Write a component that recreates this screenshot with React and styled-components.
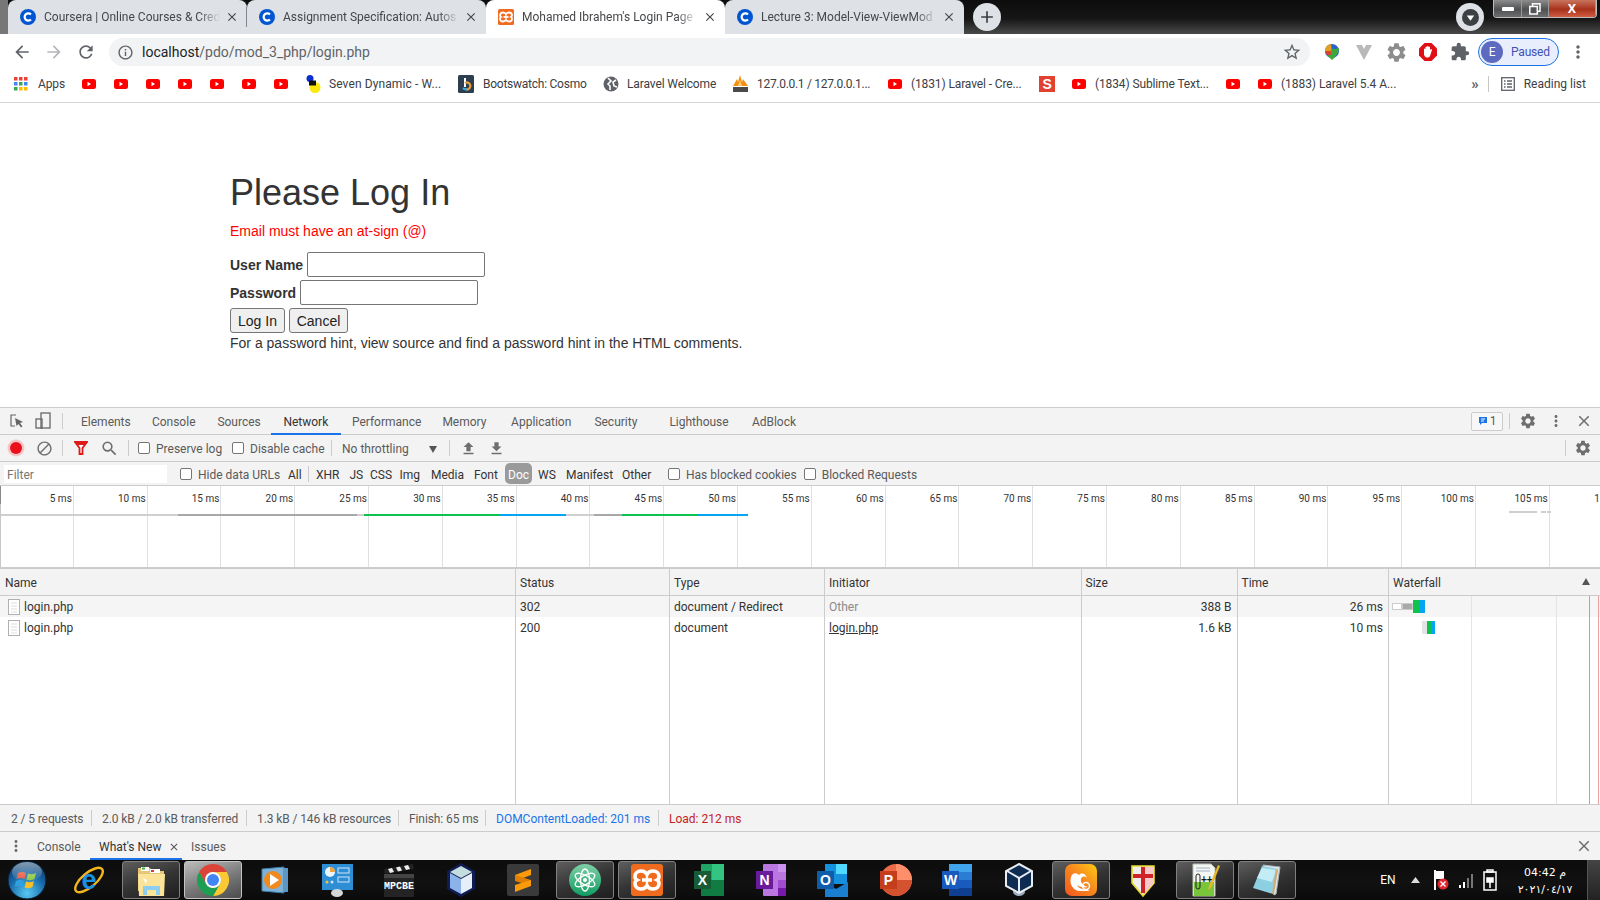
import React from 'react';
import styled, { createGlobalStyle } from 'styled-components';
import {
  MdArrowBack, MdArrowForward, MdRefresh, MdInfoOutline, MdStarBorder, MdExtension, MdMoreVert,
  MdClose, MdAdd, MdSettings, MdSearch, MdBlock, MdFileUpload, MdFileDownload,
} from 'react-icons/md';

const UI = '"Roboto", "Liberation Sans", sans-serif';

const Global = createGlobalStyle`
  html, body { margin: 0; padding: 0; background: #fff; overflow: hidden; }
  * { box-sizing: border-box; }
`;

const Screen = styled.div`
  width: 1600px; height: 900px; display: flex; flex-direction: column; overflow: hidden;
  font-family: ${UI}; font-size: 12px; color: #333;
`;

/* ---------- browser tab strip ---------- */
const TabStrip = styled.div`
  height: 34px; flex: none; display: flex; align-items: flex-start; padding-left: 8px;
  background: linear-gradient(90deg, #777 0, #777 8px, transparent 8px), linear-gradient(#0d0d0d 0, #161616 55%, #4a4a4a 100%);
`;
const Tab = styled.div`
  position: relative; width: 239px; height: 34px; display: flex; align-items: center; padding: 0 8px 0 12px;
  background: ${p => (p.$active ? '#fff' : '#dee1e6')}; border-radius: 8px 8px 0 0;
  ${p => p.$sep && `&::after { content: ''; position: absolute; right: 0; top: 7px; bottom: 7px; width: 1px; background: #80868b; }`}
`;
const TabTitle = styled.span`
  flex: 1; min-width: 0; margin-left: 8px; white-space: nowrap; overflow: hidden; font-size: 12px; color: #45474a;
  -webkit-mask-image: linear-gradient(90deg, #000 88%, transparent);
  mask-image: linear-gradient(90deg, #000 88%, transparent);
`;
const TabClose = styled.span`
  flex: none; width: 14px; display: flex; margin-left: 5px; color: #45474a; font-size: 14px;
`;
const NewTab = styled.div`
  width: 28px; height: 28px; margin: 3px 0 0 9px; border-radius: 50%; background: #dee1e6; color: #3c4043;
  display: flex; align-items: center; justify-content: center; font-size: 20px;
`;
const ProfileMenu = styled.div`
  width: 28px; height: 28px; margin: 3px 0 0 auto; border-radius: 50%; background: #dee1e6;
  display: flex; align-items: center; justify-content: center;
`;
const WindowControls = styled.div`
  width: 104px; height: 18px; margin: 0 3px 0 9px; display: flex; border: 1px solid #bdbdbd; border-top: 0; border-radius: 0 0 4px 4px; overflow: hidden;
`;
const WinBtn = styled.div`
  width: ${p => p.$w}px; flex: none; display: flex; align-items: center; justify-content: center; color: #fff;
  border-right: 1px solid #9a9a9a; font-size: 13px; font-weight: 700;
  background: ${p => (p.$close ? 'linear-gradient(#c9745f, #a9311a 55%, #cf5d44)' : 'linear-gradient(#8d8d8d, #4e5052 55%, #6c6e70)')};
`;

/* ---------- browser toolbar ---------- */
const Toolbar = styled.div`
  height: 35px; flex: none; display: flex; align-items: center; padding: 1px 0 0 6px; background: #fff;
`;
const NavBtn = styled.div`
  width: ${p => p.$w || 32}px; height: 28px; flex: none; display: flex; align-items: center; justify-content: center;
  font-size: ${p => p.$size || 20}px; color: ${p => (p.$off ? '#b5b7ba' : '#5f6368')};
`;
const Address = styled.div`
  width: 1201px; height: 28px; margin: 0 6px 0 7px; border-radius: 14px; background: #f1f3f4; display: flex; align-items: center; padding-left: 8px;
  font-size: 14px; color: #5f6368;
`;
const Host = styled.span`color: #202124; margin-left: 8px;`;
const AddressEnd = styled.span`margin-left: auto; margin-right: 8px; display: flex; font-size: 20px; color: #5f6368;`;
const ProfilePill = styled.div`
  width: 81px; height: 28px; margin-left: 2px; border: 1px solid #1a73e8; border-radius: 14px; background: #e8eefc; display: flex; align-items: center; padding-left: 2px; color: #3f51b5; font-size: 12px; letter-spacing: -0.2px;
`;
const Avatar = styled.span`
  width: 22px; height: 22px; margin-right: 8px; border-radius: 50%; background: #5c6bc0; color: #fff; display: flex; align-items: center; justify-content: center; font-size: 12px;
`;

/* ---------- bookmarks ---------- */
const BookmarkBar = styled.div`
  height: 34px; flex: none; display: flex; align-items: center; padding: 0 14px 3px 14px; background: #fff; border-bottom: 1px solid #d6d6d6;
`;
const Bookmark = styled.div`
  width: ${p => p.$w}px; flex: none; display: flex; align-items: center; gap: ${p => p.$gap ?? 8}px; white-space: nowrap; font-size: 12px; letter-spacing: ${p => p.$ls ?? -0.12}px; color: #3c4043;
`;
const BookmarkEnd = styled.div`
  margin-left: auto; display: flex; align-items: center; color: #3c4043; font-size: 12px;
`;
const Chevrons = styled.span`font-size: 15px; font-weight: 700; color: #5f6368; margin-right: 9px; line-height: 1;`;
const VRule = styled.span`width: 1px; height: 16px; background: #c7c7c7; margin-right: 12px;`;
const ReadingLabel = styled.span`margin-left: 9px;`;

/* ---------- page ---------- */
const Page = styled.main`
  height: 304px; flex: none; padding: 70px 0 0 230px; background: #fff; font-family: "Liberation Sans", Arial, sans-serif; font-size: 14px; line-height: 20px; color: #333;
`;
const Heading = styled.h1`
  margin: 0 0 9px; font-size: 36px; font-weight: 400; line-height: 39px;
`;
const ErrorText = styled.p`margin: 0 0 11px; color: #f00;`;
const FieldRow = styled.p`margin: 0 0 3px; height: 25px; display: flex; align-items: center; gap: 4px;`;
const FieldLabel = styled.label`font-weight: 700;`;
const TextInput = styled.div`
  width: 178px; height: 25px; background: #fff; border: 1px solid #767676; border-radius: 2px;
`;
const Buttons = styled.div`display: flex; gap: 4px; height: 25px;`;
const PageButton = styled.div`
  width: ${p => p.$w}px; height: 25px; display: flex; align-items: center; justify-content: center; background: #efefef; border: 1px solid #767676; border-radius: 3px; color: #222;
`;
const Hint = styled.p`margin: 0; `;

/* ---------- devtools ---------- */
const DevTools = styled.section`
  flex: 1; min-height: 0; display: flex; flex-direction: column; background: #f3f3f3; color: #333; font-size: 12px;
`;
const Bar = styled.div`
  height: ${p => p.$h}px; flex: none; display: flex; align-items: center; background: #f3f3f3;
  border-bottom: 1px solid #ccc; ${p => p.$top && 'border-top: 1px solid #ccc;'}
  color: #5a5a5a;
`;
const DevIcon = styled.span`
  width: ${p => p.$w || 28}px; flex: none; height: 100%; display: flex; align-items: center; justify-content: center; font-size: ${p => p.$size || 17}px; color: ${p => p.$color || '#6e6e6e'};
  ${p => p.$end && 'margin-left: auto; margin-right: 2px;'}
`;
const Sep = styled.span`
  width: 1px; height: 16px; flex: none; background: #ccc; margin: 0 ${p => p.$r ?? 6}px 0 ${p => p.$l ?? 6}px;
`;
const PushSep = styled(Sep)`margin-left: auto;`;
const EndGap = styled.span`width: 2px; flex: none;`;
const DevTab = styled.div`
  width: ${p => p.$w}px; flex: none; height: 100%; display: flex; align-items: center; position: relative; padding-top: 2px; color: #5a5a5a;
  ${p => p.$active && `color: #333; &::after { content: ''; position: absolute; left: -12px; right: 11px; bottom: -1px; height: 2px; background: #1a73e8; }`}
`;
const Badge = styled.div`
  width: 32px; height: 19px; margin-left: auto; border: 1px solid #ccc; border-radius: 2px; display: flex; align-items: center; justify-content: center; gap: 2px; color: #5a5a5a; background: #f7f7f7;
`;
const CheckLabel = styled.label`
  width: ${p => p.$w}px; flex: none; display: flex; align-items: center; gap: 6px; white-space: nowrap; color: #5a5a5a; padding-top: 2px;
`;
const Box = styled.span`
  width: 12px; height: 12px; flex: none; margin-top: -2px; background: #fff; border: 1px solid #767676; border-radius: 2px;
`;
const Throttle = styled.div`
  width: 107px; flex: none; display: flex; align-items: center; justify-content: space-between; color: #5a5a5a; padding: 2px 12px 0 0;
`;
const Triangle = styled.span`
  width: 0; height: 0; border: 4px solid transparent; border-top: 7px solid #555; border-bottom: 0;
`;
const FilterInput = styled.div`
  width: 163px; height: 18px; margin: 0 13px 0 4px; background: #fff; padding: 2px 3px 0; display: flex; align-items: center; color: #757575;
`;
const TypeBtn = styled.div`
  width: ${p => p.$w}px; flex: none; height: 21px; padding-top: 2px; margin-left: ${p => p.$ml || 0}px; display: flex; align-items: center; justify-content: ${p => (p.$on ? 'center' : 'flex-start')};
  color: ${p => (p.$on ? '#fff' : '#333')}; background: ${p => (p.$on ? '#9a9a9a' : 'transparent')}; border-radius: ${p => (p.$on ? '5px' : '0')};
`;

const Overview = styled.div`
  height: 83px; flex: none; position: relative; display: flex; background: #fff; overflow: hidden;
  border-bottom: 2px solid #ccc;
  &::before { content: ''; position: absolute; left: 0; top: 0; width: 1px; height: 18px; background: #888; }
  &::after { content: ''; position: absolute; left: 0; top: 18px; bottom: 0; width: 1px; background: #c8c8c8; }
`;
const Tick = styled.div`
  flex: 0 0 ${p => p.$w}px; border-right: 1px solid #e0e0e0; padding: 6px 1px 0 0; text-align: right; font-size: 10px; color: #333; white-space: nowrap; line-height: 13px;
  &:last-of-type { flex-basis: 78.8px; padding-right: 0; }
`;
const Traffic = styled.svg`position: absolute; left: 0; top: 0; pointer-events: none;`;

const Grid = styled.div`
  display: grid; grid-template-columns: 515px 154px 155px 256.5px 156px 151.5px 212px; flex: ${p => (p.$fill ? '1' : 'none')}; min-height: 0;
  height: ${p => (p.$fill ? 'auto' : p.$h + 'px')}; background: ${p => p.$bg || '#fff'};
  ${p => p.$line && 'border-bottom: 1px solid #ccc;'}
`;
const Cell = styled.div`
  position: relative; display: flex; align-items: center; justify-content: ${p => (p.$right ? 'flex-end' : 'flex-start')}; gap: 5px; white-space: nowrap;
  border-left: ${p => (p.$first ? '1px solid transparent' : '1px solid #ccc')}; padding: ${p => (p.$head ? 2 : 0)}px ${p => (p.$right ? 5 : 4)}px 0;
  color: ${p => p.$color || '#333'}; ${p => p.$link && 'text-decoration: underline;'}
`;
const FileSlot = styled.span`display: flex; margin-left: 3px; margin-right: -1px;`;
const SortArrow = styled.span`
  position: absolute; right: 10px; top: 50%; margin-top: -4px; width: 0; height: 0; border: 4px solid transparent; border-bottom: 7px solid #555; border-top: 0;
`;
const WfLine = styled.span`
  position: absolute; top: 0; bottom: 0; left: ${p => p.$x}px; width: 1px; background: ${p => p.$c};
`;
const WfBar = styled.span`
  position: absolute; top: 4px; height: 13px; left: ${p => p.$x}px; width: ${p => p.$w}px; background: ${p => p.$c};
  ${p => p.$outline && 'border: 1px solid #ccc; top: 7px; height: 7px;'}
`;
const StatusBar = styled.div`
  height: 28px; flex: none; display: flex; align-items: center; background: #f3f3f3; border-top: 1px solid #ccc; border-bottom: 1px solid #ccc; padding-left: 11px;
`;
const StatusItem = styled.div`
  width: ${p => p.$w}px; height: 16px; flex: none; display: flex; align-items: center; padding-top: 2px; white-space: nowrap; letter-spacing: ${p => (p.$color ? 0 : -0.1)}px; color: ${p => p.$color || '#5a5a5a'};
  ${p => p.$sep && 'border-right: 1px solid #ccc; margin-right: 10px;'}
`;
const Drawer = styled.div`
  height: 28px; flex: none; display: flex; align-items: center; background: #f3f3f3; color: #5a5a5a; position: relative;
`;
const DrawerTab = styled.div`
  width: ${p => p.$w}px; flex: none; height: 100%; display: flex; align-items: center; padding: 1px 0 0 ${p => p.$pad}px; gap: 7px; position: relative; color: #5a5a5a;
  ${p => p.$active && `color: #333; &::after { content: ''; position: absolute; left: 0; right: 0; bottom: 0; height: 2px; background: #1a73e8; }`}
`;
const TinyX = styled.span`font-size: 12px; display: flex; color: #555;`;

/* ---------- taskbar ---------- */
const Taskbar = styled.footer`
  height: 40px; flex: none; display: flex; align-items: center; background: linear-gradient(#0c0c0c, #111 60%, #0a0a0a); position: relative; z-index: 1;
`;
const StartOrb = styled.div`width: 60px; flex: none; height: 100%; display: flex; align-items: center; padding-left: 7px;`;
const TaskItems = styled.div`display: flex; gap: 4px; height: 100%; align-items: center;`;
const TaskItem = styled.div`
  width: 58px; flex: none; height: 38px; display: flex; align-items: center; justify-content: center; border-radius: 3px;
  ${p => p.$open && 'background: linear-gradient(160deg, #5e5e5e, #343434 50%, #1e1e1e); border: 1px solid #808080;'}
  ${p => p.$hot && 'background: linear-gradient(160deg, #bdbdbd, #777 55%, #4c4c4c); border: 1px solid #c4c4c4;'}
`;
const Tray = styled.div`
  margin-left: auto; height: 100%; display: flex; align-items: center; color: #fff; font-size: 12px;
`;
const TrayItem = styled.span`
  width: ${p => p.$w}px; flex: none; display: flex; align-items: center; justify-content: center;
`;
const Clock = styled.div`
  width: 78px; flex: none; display: flex; flex-direction: column; align-items: center; padding-top: 2px; color: #fff; font-family: "DejaVu Sans", "Noto Sans", sans-serif; font-size: 11px; line-height: 17px; margin-left: 3px;
`;
const ShowDesktop = styled.span`width: 13px; height: 100%; margin-left: 3px; background: linear-gradient(#444, #222); border-left: 1px solid #555;`;

/* ---------- drawings ---------- */
const Coursera = () => (
  <svg width="16" height="16" viewBox="0 0 16 16"><circle cx="8" cy="8" r="8" fill="#0056d2" /><path d="M11 5.400A3.700 3.700 0 1 0 11 10.600" fill="none" stroke="#fff" strokeWidth="2.200" /></svg>
);
const Xampp = ({ s = 16 }) => (
  <svg width={s} height={s} viewBox="0 0 32 32"><rect width="32" height="32" rx="3" fill="#ef6c1f" /><g fill="none" stroke="#fff" strokeWidth="3.600"><path d="M16 11c-1-3-3-4-6-4-4 0-6 3-6 5.500S6 16 6 16s-2 1-2 3.500S6 25 10 25c3 0 5-1 6-4" /><path d="M16 11c1-3 3-4 6-4 4 0 6 3 6 5.500S26 16 26 16s2 1 2 3.500S26 25 22 25c-3 0-5-1-6-4" /><path d="M11 16h10" /><path d="M16 11v10" strokeWidth="2.400" /></g></svg>
);
const YT = () => (
  <svg width="16" height="12" viewBox="0 0 16 12"><rect x="1" y="1" width="14" height="10" rx="2.500" fill="#f00" /><path d="M6.500 3.800v4.400L10 6z" fill="#fff" /></svg>
);
const AppsGrid = () => (
  <svg width="14" height="14" viewBox="0 0 14 14">
    {['#ea4335', '#ea4335', '#ea4335', '#4285f4', '#34a853', '#4285f4', '#34a853', '#fbbc04', '#fbbc04'].map((c, i) => (
      <rect key={i} x={(i % 3) * 5} y={Math.floor(i / 3) * 5} width="3.500" height="3.500" fill={c} />
    ))}
  </svg>
);
const SevenDyn = () => (
  <svg width="16" height="18" viewBox="0 0 16 18"><circle cx="10" cy="12.500" r="5.500" fill="#fde910" /><circle cx="5" cy="3.500" r="3.500" fill="#0b2fd0" /><rect x="4" y="5.500" width="7" height="5" fill="#111" /></svg>
);
const Bootswatch = () => (
  <svg width="16" height="18" viewBox="0 0 16 18"><rect width="16" height="18" rx="1.500" fill="#2c3e50" /><path d="M7 3v9" stroke="#fff" strokeWidth="2" /><path d="M7 8a3.500 3.500 0 1 1 0 6" fill="none" stroke="#f0a030" strokeWidth="2" /><path d="M5 13a3.500 3.500 0 0 0 4 1" fill="none" stroke="#39a9db" strokeWidth="2" /></svg>
);
const Globe = () => (
  <svg width="16" height="16" viewBox="0 0 16 16"><circle cx="8" cy="8" r="7.500" fill="#5f6368" /><path d="M5 2l3 3-3 3 2 2v4M13 4l-3 2 1 4 3 1" fill="none" stroke="#fff" strokeWidth="1.600" /></svg>
);
const Pma = () => (
  <svg width="17" height="18" viewBox="0 0 17 18"><path d="M1 11L5 4l1 3 2-7 2 7 1-3 5 7z" fill="#f29111" /><path d="M6 11l2-6 2 6z" fill="#fbc97a" /><rect x="1" y="12" width="15" height="5" fill="#4a4a4a" /></svg>
);
const SBadge = () => (
  <svg width="16" height="16" viewBox="0 0 16 16"><rect width="16" height="16" fill="#e2412f" /><text x="8" y="13" fontFamily="Liberation Sans" fontSize="14" fontWeight="700" fill="#fff" textAnchor="middle">S</text></svg>
);
const ReadingList = () => (
  <svg width="14" height="14" viewBox="0 0 14 14" fill="none" stroke="#5f6368" strokeWidth="1.300"><rect x=".7" y=".7" width="12.600" height="12.600" /><path d="M3 4h1.500M6 4h5M3 7h1.500M6 7h5M3 10h1.500M6 10h5" /></svg>
);
const IDM = () => (
  <svg width="18" height="18" viewBox="0 0 18 18"><circle cx="9" cy="8" r="7" fill="#2a62c9" /><path d="M2 8a7 7 0 0 1 6-7l1 7z" fill="#e0a028" /><path d="M2 8c1 4 4 6 7 6V8z" fill="#d8432e" /><path d="M8 6c3 0 5 0 8-1-.5 4-1.500 7-7 12L4 12h4z" fill="#3fa63b" /></svg>
);
const VExt = () => <svg width="16" height="16" viewBox="0 0 16 16"><path d="M0 1h6l2 4 2-4h6L8 16z" fill="#b9b9b9" /></svg>;
const AdBlockExt = () => (
  <svg width="18" height="18" viewBox="0 0 18 18"><path d="M5.500 0h7L18 5.500v7L12.500 18h-7L0 12.500v-7z" fill="#e00f16" /><path d="M5 9V6a1 1 0 0 1 1.500 0V4a1 1 0 0 1 1.500 0v-.500a1 1 0 0 1 1.500 0V4a1 1 0 0 1 1.500 0v3l1-1a1 1 0 0 1 1 1l-2 6c-.5 1-1.500 1.500-2.500 1.500H8c-2 0-3-2-3-3.500z" fill="#fff" /></svg>
);
const Rec = () => <svg width="18" height="18" viewBox="0 0 18 18"><circle cx="9" cy="9" r="8.500" fill="#f6c6c6" /><circle cx="9" cy="9" r="6" fill="#e8111b" /></svg>;
const Inspect = () => (
  <svg width="16" height="16" viewBox="0 0 16 16" fill="none"><path d="M7 2H2v11h4" stroke="#666" strokeWidth="1.200" /><path d="M6 5l8 4-3 1 2.500 3.500-1.500 1L9.500 11 7.500 13z" fill="#666" /></svg>
);
const Device = () => (
  <svg width="16" height="18" viewBox="0 0 16 18" fill="none" stroke="#666" strokeWidth="1.300"><rect x="6" y="1" width="9" height="15" /><rect x="1" y="7" width="6" height="9" /></svg>
);
const Funnel = () => <svg width="14" height="14" viewBox="0 0 14 14"><path d="M1 1h12L8.500 7v6h-3V7z" fill="#fff" stroke="#e01919" strokeWidth="1.800" /><path d="M1 1h12L11 4H3z" fill="#e01919" /></svg>;
const FileDoc = () => (
  <svg width="12" height="16" viewBox="0 0 12 16" fill="#fff" stroke="#b0b0b0"><rect x=".5" y=".5" width="11" height="15" /><path d="M3 4h6M3 7h6M3 10h6M3 13h6" stroke="#ddd" /></svg>
);
const MsgIcon = () => <svg width="10" height="10" viewBox="0 0 10 10"><path d="M1 1h8v6H4L2 9V7H1z" fill="#1a73e8" /><path d="M3 3h4M3 5h3" stroke="#fff" /></svg>;

const S = p => <svg width="34" height="34" viewBox="0 0 34 34" {...p} />;
const Orb = () => (
  <svg width="40" height="40" viewBox="0 0 40 40">
    <defs>
      <radialGradient id="orb" cx=".5" cy=".85" r=".9"><stop offset="0" stopColor="#58c8f2" /><stop offset=".55" stopColor="#1668a8" /><stop offset="1" stopColor="#0a2a50" /></radialGradient>
      <linearGradient id="gloss" x1="0" y1="0" x2="0" y2="1"><stop offset="0" stopColor="#fff" stopOpacity=".5" /><stop offset="1" stopColor="#fff" stopOpacity="0" /></linearGradient>
    </defs>
    <circle cx="20" cy="20" r="19" fill="url(#orb)" stroke="#0a1a2c" strokeWidth="1" />
    <path d="M11 13c3-1.500 5-1 8 0l-1.500 6c-3-1-5-1.500-8 0z" fill="#e8523a" /><path d="M21 13.500c3 1 5 1 8-.5l-1.500 6c-3 1.500-5 1.500-8 .5z" fill="#8cc63f" />
    <path d="M9 21c3-1.500 5-1 8 0l-1.500 6c-3-1-5-1.500-8 0z" fill="#2f9fe0" /><path d="M19 21.500c3 1 5 1 8-.5l-1.500 6c-3 1.500-5 1.500-8 .5z" fill="#f6c026" />
    <ellipse cx="20" cy="12" rx="15" ry="10" fill="url(#gloss)" />
  </svg>
);
const TaskIcons = {
  ie: () => (<S><ellipse cx="17" cy="17" rx="17" ry="7" fill="none" stroke="#f3b71d" strokeWidth="2.400" transform="rotate(-40 17 17)" /><text x="17" y="26" textAnchor="middle" fontFamily="Liberation Sans" fontWeight="700" fontSize="27" fill="#1b8fe0">e</text></S>),
  folder: () => (<S><path d="M4 5h12l3 3h11v20H4z" fill="#e6c777" /><rect x="7" y="4" width="8" height="4" fill="#fff" /><rect x="16" y="6" width="10" height="4" fill="#fff" /><rect x="8" y="4.500" width="3" height="2" fill="#3fae3f" /><rect x="17" y="7" width="3" height="2" fill="#d63a3a" /><path d="M4 11h27l-1 22H5z" fill="#fbe49a" /><path d="M9 23h17v9h-4v-5h-9v5H9z" fill="#8ccdf0" /><path d="M9 15l3 6 1-4z" fill="#fff" /></S>),
  chrome: () => (<S><path d="M3.140 9A16 16 0 0 1 30.860 9H17a8 8 0 0 0-6.500 12.500z" fill="#db4437" /><path d="M30.860 9A16 16 0 0 1 17 33l6.500-11.500A8 8 0 0 0 17 9z" fill="#fcc934" /><path d="M17 33A16 16 0 0 1 3.140 9l7.360 12.500a8 8 0 0 0 13 0z" fill="#1e9e50" /><circle cx="17" cy="17" r="8" fill="#fff" /><circle cx="17" cy="17" r="6" fill="#4285f4" /></S>),
  wmp: () => (<S><path d="M4 6l22-2v26L4 28z" fill="#7fb2d6" stroke="#3b7ca8" /><path d="M26 5h4v24h-4z" fill="#5d96c2" /><circle cx="15" cy="17" r="9" fill="#f08a1d" /><path d="M12 11l9 6-9 6z" fill="#fff" /></S>),
  panel: () => (<S><rect x="2" y="1" width="31" height="26" fill="#2d8ed6" /><circle cx="10" cy="9" r="5" fill="#eaf4fb" /><path d="M10 9V4a5 5 0 0 1 5 5z" fill="#f2a23b" /><rect x="18" y="5" width="11" height="5" fill="none" stroke="#cfe6f7" /><rect x="18" y="14" width="11" height="5" fill="none" stroke="#cfe6f7" /><circle cx="7" cy="19" r="1.500" fill="#f2c23b" /><circle cx="12" cy="19" r="1.500" fill="#cfe6f7" /><ellipse cx="17" cy="30" rx="6" ry="4" fill="#d6d6d6" /></S>),
  mpc: () => (<S><rect x="2" y="11" width="30" height="23" fill="#242424" /><rect x="2" y="11" width="30" height="4" fill="#444" /><path d="M2 6l29-5 1 5L3 11z" fill="#222" /><path d="M6 6l4-1 2 4-4 1zM14 4.500l4-1 2 4-4 1zM22 3l4-1 2 4-4 1z" fill="#eee" /><text x="17" y="26" textAnchor="middle" fontFamily="Liberation Mono" fontSize="10" fontWeight="700" fill="#fff">MPCBE</text></S>),
  cube: () => (<S><path d="M17 0L31 8v18l-14 8L3 26V8z" fill="#101c52" /><path d="M17 3l11 6-11 6L6 9z" fill="#c4dde0" /><path d="M6 10l11 6v15L6 25z" fill="#8cb2ea" /><path d="M28 10l-11 6v15l11-6z" fill="#e6eef7" /></S>),
  sublime: () => (<S><rect x="1" y="1" width="32" height="32" rx="2" fill="#3a3a3a" /><path d="M9 12l16-6v6L9 18z" fill="#fb9a0b" /><path d="M9 18l16 5v-6L9 12z" fill="#e07f00" /><path d="M9 22l16-5v6L9 29z" fill="#fb9a0b" /></S>),
  atom: () => (<S><defs><linearGradient id="atomg" x1="0" y1="0" x2="0" y2="1"><stop offset="0" stopColor="#7fd0a6" /><stop offset="1" stopColor="#0f9d63" /></linearGradient></defs><circle cx="17" cy="17" r="16" fill="url(#atomg)" /><g fill="none" stroke="#fff" strokeWidth="1.300"><ellipse cx="17" cy="17" rx="11" ry="4.500" transform="rotate(30 17 17)" /><ellipse cx="17" cy="17" rx="11" ry="4.500" transform="rotate(90 17 17)" /><ellipse cx="17" cy="17" rx="11" ry="4.500" transform="rotate(150 17 17)" /></g><circle cx="17" cy="17" r="2" fill="#fff" /></S>),
  xampp: () => <Xampp s={32} />,
  excel: () => (<S><rect x="9" y="1" width="23" height="32" rx="1" fill="#21a366" /><rect x="20" y="1" width="12" height="16" fill="#33c481" /><rect x="9" y="17" width="23" height="16" fill="#107c41" /><rect x="2" y="8" width="17" height="18" fill="#185c37" /><text x="10.500" y="22" textAnchor="middle" fontFamily="Liberation Sans" fontWeight="700" fontSize="14" fill="#fff">X</text></S>),
  onenote: () => (<S><rect x="9" y="1" width="23" height="32" rx="1" fill="#ba77e0" /><rect x="24" y="1" width="8" height="8" fill="#ca92ea" /><rect x="24" y="17" width="8" height="8" fill="#a14bd0" /><rect x="24" y="25" width="8" height="8" fill="#7719aa" /><rect x="2" y="8" width="17" height="18" fill="#6a1a9a" /><text x="10.500" y="22" textAnchor="middle" fontFamily="Liberation Sans" fontWeight="700" fontSize="14" fill="#fff">N</text></S>),
  outlook: () => (<S><rect x="9" y="1" width="22" height="20" fill="#1490df" /><rect x="20" y="1" width="11" height="10" fill="#50d9ff" /><path d="M9 19l11 7 12-7v15H9z" fill="#1a7fd0" /><rect x="1" y="8" width="17" height="18" fill="#0f5ca8" /><text x="9.500" y="22" textAnchor="middle" fontFamily="Liberation Sans" fontWeight="700" fontSize="14" fill="#fff">O</text></S>),
  ppt: () => (<S><circle cx="18" cy="17" r="16" fill="#ed6c47" /><path d="M18 1a16 16 0 0 1 16 16H18z" fill="#ff8f6b" /><path d="M18 17h16a16 16 0 0 1-16 16 16 16 0 0 1-16-16z" fill="#d35230" /><rect x="2" y="8" width="17" height="18" fill="#c43e1c" /><text x="10.500" y="22" textAnchor="middle" fontFamily="Liberation Sans" fontWeight="700" fontSize="14" fill="#fff">P</text></S>),
  word: () => (<S><rect x="9" y="1" width="23" height="32" fill="#2b7cd3" /><rect x="9" y="1" width="23" height="8" fill="#41a5ee" /><rect x="9" y="17" width="23" height="8" fill="#185abd" /><rect x="9" y="25" width="23" height="8" fill="#103f91" /><rect x="2" y="8" width="17" height="18" fill="#185abd" /><text x="10.500" y="22" textAnchor="middle" fontFamily="Liberation Sans" fontWeight="700" fontSize="14" fill="#fff">W</text></S>),
  vbox: () => (<S><ellipse cx="17" cy="29" rx="6" ry="4" fill="#9aa9bb" /><path d="M17 1L30 8v15L17 30 4 23V8z" fill="#0e2c52" stroke="#e8edf3" strokeWidth="2" /><path d="M5 8l12 7 12-7" fill="none" stroke="#e8edf3" strokeWidth="2" /><path d="M17 15v15" stroke="#e8edf3" strokeWidth="2" /></S>),
  uc: () => (<S><defs><linearGradient id="ucg" x1="0" y1="1" x2="1" y2="0"><stop offset="0" stopColor="#f4551e" /><stop offset=".55" stopColor="#f68b1e" /><stop offset="1" stopColor="#ffcb14" /></linearGradient></defs><rect x="1" y="1" width="32" height="32" rx="7" fill="url(#ucg)" /><path d="M7 14c-2 7 2 13 8 14h11c-4-2-11-1-13-6 3 2 7 3 11 2-4-1-8-4-7-8 1-3 4-3 6-1-1-4-5-6-8-3-3-3-7-2-8 2z" fill="#fff" /><circle cx="22" cy="23" r="3.500" fill="none" stroke="#fff" strokeWidth="1.500" /></S>),
  shield: () => (<S><path d="M6 3h22v17L17 33 6 20z" fill="#ededed" stroke="#e8d92b" strokeWidth="1.600" /><path d="M17 4h11v16L17 32z" fill="#f7c9c9" /><rect x="15" y="4" width="4" height="26" fill="#cf2229" /><rect x="7" y="11" width="20" height="4" fill="#cf2229" /></S>),
  npp: () => (<S><path d="M5 1h18l4 4v28H5z" fill="#f4f6f2" stroke="#b9c4b4" /><rect x="6" y="19" width="20" height="14" fill="#79c63a" /><path d="M8 5h14M8 8h14" stroke="#9db1c4" /><text x="13" y="20" fontFamily="Liberation Sans" fontSize="10" fontWeight="700" fill="#111">++</text><rect x="8" y="11" width="4" height="15" rx="2" fill="none" stroke="#222" /><path d="M30 2l2 1-9 22-3 2 1-4z" fill="#e8b72a" /></S>),
  notepad: () => (<S><path d="M13 2l17 2-4 27-2 1z" fill="#dfe7ea" stroke="#a7b4b9" /><path d="M12 3l16 3-5 25L3 25z" fill="#8dd0e2" /><path d="M12 5l14 2-4 12L7 15z" fill="#c3ecf5" /><path d="M26 6l2 1-4 24h-2z" fill="#d8a86a" /></S>),
};

/* ---------- data ---------- */
const tabs = [
  { icon: <Coursera />, title: 'Coursera | Online Courses & Cred', sep: true },
  { icon: <Coursera />, title: 'Assignment Specification: Autos' },
  { icon: <Xampp />, title: "Mohamed Ibrahem's Login Page", active: true },
  { icon: <Coursera />, title: 'Lecture 3: Model-View-ViewMod' },
];
const bookmarks = [
  { w: 67, icon: <AppsGrid />, text: 'Apps', gap: 10 },
  ...[0, 1, 2, 3, 4, 5, 6].map(() => ({ w: 32, icon: <YT /> })),
  { w: 153, icon: <SevenDyn />, text: 'Seven Dynamic - W...', ls: 0.1 },
  { w: 145, icon: <Bootswatch />, text: 'Bootswatch: Cosmo', gap: 9, ls: -0.25 },
  { w: 129, icon: <Globe />, text: 'Laravel Welcome' },
  { w: 155, icon: <Pma />, text: '127.0.0.1 / 127.0.0.1...', gap: 8, ls: -0.3 },
  { w: 152, icon: <YT />, text: '(1831) Laravel - Cre...' },
  { w: 32, icon: <SBadge /> },
  { w: 154, icon: <YT />, text: '(1834) Sublime Text...' },
  { w: 32, icon: <YT /> },
  { w: 170, icon: <YT />, text: '(1883) Laravel 5.4 A...', ls: -0.05 },
];
const devTabs = [
  ['Elements', 70.9], ['Console', 65.5], ['Sources', 66], ['Network', 68.5, true], ['Performance', 90.5],
  ['Memory', 68.7], ['Application', 83.3], ['Security', 75], ['Lighthouse', 82.5], ['AdBlock', 60],
];
const typeFilters = [
  ['XHR', 33.5], ['JS', 20.5], ['CSS', 29.5], ['Img', 31.5], ['Media', 43], ['Font', 31], ['Doc', 27, true], ['WS', 28, false, 6], ['Manifest', 56], ['Other', 46],
];
const taskItems = [
  ['ie'], ['folder', 'open'], ['chrome', 'hot'], ['wmp'], ['panel'], ['mpc'], ['cube'], ['sublime'], ['atom', 'open'], ['xampp', 'open'],
  ['excel'], ['onenote'], ['outlook'], ['ppt'], ['word'], ['vbox'], ['uc', 'open'], ['shield'], ['npp', 'open'], ['notepad', 'open'],
];
const ticks = Array.from({ length: 22 }, (_, i) => `${(i + 1) * 5} ms`);
const trafficSegs = [
  [1, 178, 515, '#cfcfcf'], [178, 357, 515, '#a8a8a8'], [357, 364, 515, '#cfcfcf'], [364, 500, 515, '#0dc34e'], [500, 566, 515, '#05a5f5'],
  [566, 594, 515, '#cfcfcf'], [594, 622, 515, '#a8a8a8'], [622, 697, 515, '#0dc34e'], [697, 748, 515, '#05a5f5'],
  [1509, 1537, 512, '#cfcfcf'], [1541, 1546, 512, '#cfcfcf'], [1547, 1551, 512, '#cfcfcf'],
];

const columns = (values, extra = {}) => values.map((v, i) => (
  <Cell key={i} $first={i === 0} {...(extra.all || {})} {...(extra[i] || {})}>{v}</Cell>
));

const WaterfallLines = () => (
  <>
    <WfLine $x={82} $c="#e4e4e4" />
    <WfLine $x={167} $c="#e4e4e4" />
    <WfLine $x={200} $c="#7fb2e6" />
    <WfLine $x={209} $c="#e9a0a0" />
  </>
);

export default function App() {
  return (
    <Screen>
      <Global />
      <TabStrip>
        {tabs.map(t => (
          <Tab key={t.title} $active={t.active} $sep={t.sep}>
            {t.icon}
            <TabTitle>{t.title}</TabTitle>
            <TabClose><MdClose /></TabClose>
          </Tab>
        ))}
        <NewTab><MdAdd /></NewTab>
        <ProfileMenu>
          <svg width="17" height="17" viewBox="0 0 16 16"><circle cx="8" cy="8" r="8" fill="#3c4043" /><path d="M4.500 6h7L8 11z" fill="#fff" /></svg>
        </ProfileMenu>
        <WindowControls>
          <WinBtn $w={28}>
            <svg width="12" height="4" viewBox="0 0 12 4"><rect width="12" height="4" rx="1" fill="#fff" /></svg>
          </WinBtn>
          <WinBtn $w={27}>
            <svg width="12" height="12" viewBox="0 0 12 12" fill="none" stroke="#fff" strokeWidth="1.500"><rect x="3.500" y=".8" width="7.500" height="7.500" /><rect x=".8" y="3.500" width="7.500" height="7.500" fill="#555" /></svg>
          </WinBtn>
          <WinBtn $w={47} $close>X</WinBtn>
        </WindowControls>
      </TabStrip>

      <Toolbar>
        <NavBtn><MdArrowBack /></NavBtn>
        <NavBtn $off><MdArrowForward /></NavBtn>
        <NavBtn><MdRefresh /></NavBtn>
        <Address>
          <MdInfoOutline size={17} color="#5f6368" />
          <span>
            <Host>localhost</Host>/pdo/mod_3_php/login.php
          </span>
          <AddressEnd><MdStarBorder /></AddressEnd>
        </Address>
        <NavBtn><IDM /></NavBtn>
        <NavBtn><VExt /></NavBtn>
        <NavBtn $size={23}><MdSettings color="#8d8d8d" /></NavBtn>
        <NavBtn><AdBlockExt /></NavBtn>
        <NavBtn><MdExtension /></NavBtn>
        <ProfilePill><Avatar>E</Avatar>Paused</ProfilePill>
        <NavBtn $w={38}><MdMoreVert /></NavBtn>
      </Toolbar>

      <BookmarkBar>
        {bookmarks.map((b, i) => (
          <Bookmark key={i} $w={b.w} $gap={b.gap} $ls={b.ls}>{b.icon}{b.text && <span>{b.text}</span>}</Bookmark>
        ))}
        <BookmarkEnd>
          <Chevrons>»</Chevrons>
          <VRule />
          <ReadingList />
          <ReadingLabel>Reading list</ReadingLabel>
        </BookmarkEnd>
      </BookmarkBar>

      <Page>
        <Heading>Please Log In</Heading>
        <ErrorText>Email must have an at-sign (@)</ErrorText>
        <FieldRow><FieldLabel>User Name</FieldLabel><TextInput /></FieldRow>
        <FieldRow><FieldLabel>Password</FieldLabel><TextInput /></FieldRow>
        <Buttons><PageButton $w={55}>Log In</PageButton><PageButton $w={59}>Cancel</PageButton></Buttons>
        <Hint>For a password hint, view source and find a password hint in the HTML comments.</Hint>
      </Page>

      <DevTools>
        <Bar $h={28} $top>
          <DevIcon $w={34}><Inspect /></DevIcon>
          <DevIcon $w={18}><Device /></DevIcon>
          <Sep $l={10} $r={18} />
          {devTabs.map(([n, w, a]) => <DevTab key={n} $w={w} $active={a}>{n}</DevTab>)}
          <Badge><MsgIcon />1</Badge>
          <Sep $l={6} $r={4} />
          <DevIcon $w={28} $size={18}><MdSettings /></DevIcon>
          <DevIcon $w={28} $size={18}><MdMoreVert /></DevIcon>
          <DevIcon $w={28} $size={18}><MdClose /></DevIcon>
          <EndGap />
        </Bar>
        <Bar $h={27}>
          <DevIcon $w={32}><Rec /></DevIcon>
          <DevIcon $w={24} $size={17}><MdBlock /></DevIcon>
          <Sep $l={6} $r={9} />
          <DevIcon $w={18}><Funnel /></DevIcon>
          <DevIcon $w={38} $size={19}><MdSearch /></DevIcon>
          <Sep $l={0} $r={9} />
          <CheckLabel $w={94}><Box />Preserve log</CheckLabel>
          <CheckLabel $w={99}><Box />Disable cache</CheckLabel>
          <Sep $l={0} $r={10} />
          <Throttle>No throttling<Triangle /></Throttle>
          <Sep $l={0} $r={4} />
          <DevIcon $w={28}><MdFileUpload /></DevIcon>
          <DevIcon $w={28}><MdFileDownload /></DevIcon>
          <PushSep $r={0} />
          <DevIcon $w={34} $size={18}><MdSettings /></DevIcon>
        </Bar>
        <Bar $h={24}>
          <FilterInput>Filter</FilterInput>
          <CheckLabel $w={108}><Box />Hide data URLs</CheckLabel>
          <TypeBtn $w={20}>All</TypeBtn>
          <Sep $l={0} $r={7} />
          {typeFilters.map(([n, w, on, ml]) => <TypeBtn key={n} $w={w} $on={on} $ml={ml}>{n}</TypeBtn>)}
          <CheckLabel $w={135.7}><Box />Has blocked cookies</CheckLabel>
          <CheckLabel $w={110}><Box />Blocked Requests</CheckLabel>
        </Bar>
        <Overview>
          {ticks.map(t => <Tick key={t} $w={73.8}>{t}</Tick>)}
          <Traffic width="1600" height="81">
            {trafficSegs.map(([a, b, y, c], i) => <rect key={i} x={a} y={y - 487} width={b - a} height="2" fill={c} />)}
          </Traffic>
        </Overview>
        <Grid $h={27} $line $bg="#f3f3f3">
          {columns(['Name', 'Status', 'Type', 'Initiator', 'Size', 'Time', <React.Fragment key="w">Waterfall<SortArrow /></React.Fragment>], { all: { $head: true } })}
        </Grid>
        <Grid $h={21} $bg="#f5f5f5">
          {columns([
            <React.Fragment key="n"><FileSlot><FileDoc /></FileSlot><span>login.php</span></React.Fragment>, '302', 'document / Redirect', 'Other', '388 B', '26 ms',
            <React.Fragment key="w"><WaterfallLines /><WfBar $x={3} $w={10} $c="#fff" $outline /><WfBar $x={13} $w={11} $c="#a8a8a8" $outline /><WfBar $x={24} $w={7} $c="#0dc34e" /><WfBar $x={31} $w={5} $c="#05a5f5" /></React.Fragment>,
          ], { 3: { $color: '#8a8a8a' }, 4: { $right: true }, 5: { $right: true } })}
        </Grid>
        <Grid $h={21}>
          {columns([
            <React.Fragment key="n"><FileSlot><FileDoc /></FileSlot><span>login.php</span></React.Fragment>, '200', 'document', 'login.php', '1.6 kB', '10 ms',
            <React.Fragment key="w"><WaterfallLines /><WfBar $x={33} $w={5} $c="#e4e4e4" /><WfBar $x={38} $w={4} $c="#0dc34e" /><WfBar $x={42} $w={4} $c="#05a5f5" /></React.Fragment>,
          ], { 3: { $link: true }, 4: { $right: true }, 5: { $right: true } })}
        </Grid>
        <Grid $fill>
          {columns(['', '', '', '', '', '', <WaterfallLines key="w" />])}
        </Grid>
        <StatusBar>
          <StatusItem $w={81} $sep>2 / 5 requests</StatusItem>
          <StatusItem $w={145} $sep>2.0 kB / 2.0 kB transferred</StatusItem>
          <StatusItem $w={142} $sep>1.3 kB / 146 kB resources</StatusItem>
          <StatusItem $w={77} $sep>Finish: 65 ms</StatusItem>
          <StatusItem $w={163} $sep $color="#1a73e8">DOMContentLoaded: 201 ms</StatusItem>
          <StatusItem $w={90} $color="#c5221f">Load: 212 ms</StatusItem>
        </StatusBar>
        <Drawer>
          <DevIcon $w={32} $size={18}><MdMoreVert /></DevIcon>
          <DrawerTab $w={58} $pad={5}>Console</DrawerTab>
          <DrawerTab $w={92} $pad={9} $active>What's New<TinyX><MdClose /></TinyX></DrawerTab>
          <DrawerTab $w={60} $pad={9}>Issues</DrawerTab>
          <DevIcon $w={28} $size={18} $end><MdClose /></DevIcon>
        </Drawer>
      </DevTools>

      <Taskbar>
        <StartOrb><Orb /></StartOrb>
        <TaskItems>
          {taskItems.map(([k, state]) => {
            const Icon = TaskIcons[k];
            return <TaskItem key={k} $open={state === 'open'} $hot={state === 'hot'}><Icon /></TaskItem>;
          })}
        </TaskItems>
        <Tray>
          <TrayItem $w={30}>EN</TrayItem>
          <TrayItem $w={24}><svg width="9" height="6" viewBox="0 0 9 6"><path d="M4.500 0L9 6H0z" fill="#ddd" /></svg></TrayItem>
          <TrayItem $w={28}><svg width="16" height="22" viewBox="0 0 16 22"><path d="M2 1v20" stroke="#fff" strokeWidth="2" /><path d="M3 2h8v8H3z" fill="#fff" /><circle cx="10" cy="15" r="5.500" fill="#e0262e" /><path d="M7.500 12.500l5 5m0-5l-5 5" stroke="#fff" strokeWidth="1.400" /></svg></TrayItem>
          <TrayItem $w={22}><svg width="15" height="16" viewBox="0 0 15 16"><path d="M0 13h2v3H0zM4 10h2v6H4z" fill="#fff" /><path d="M8 6h2v10H8zM12 2h2v14h-2z" fill="#777" /></svg></TrayItem>
          <TrayItem $w={26}><svg width="14" height="22" viewBox="0 0 14 22" fill="none" stroke="#fff" strokeWidth="1.500"><rect x="1" y="3" width="12" height="18" /><rect x="4" y="1" width="6" height="2" /><path d="M4 9h6v4H4zM7 13v6" fill="#fff" /></svg></TrayItem>
          <Clock><span>04:42 م</span><span>٢٠٢١/٠٤/١٧</span></Clock>
          <ShowDesktop />
        </Tray>
      </Taskbar>
    </Screen>
  );
}
